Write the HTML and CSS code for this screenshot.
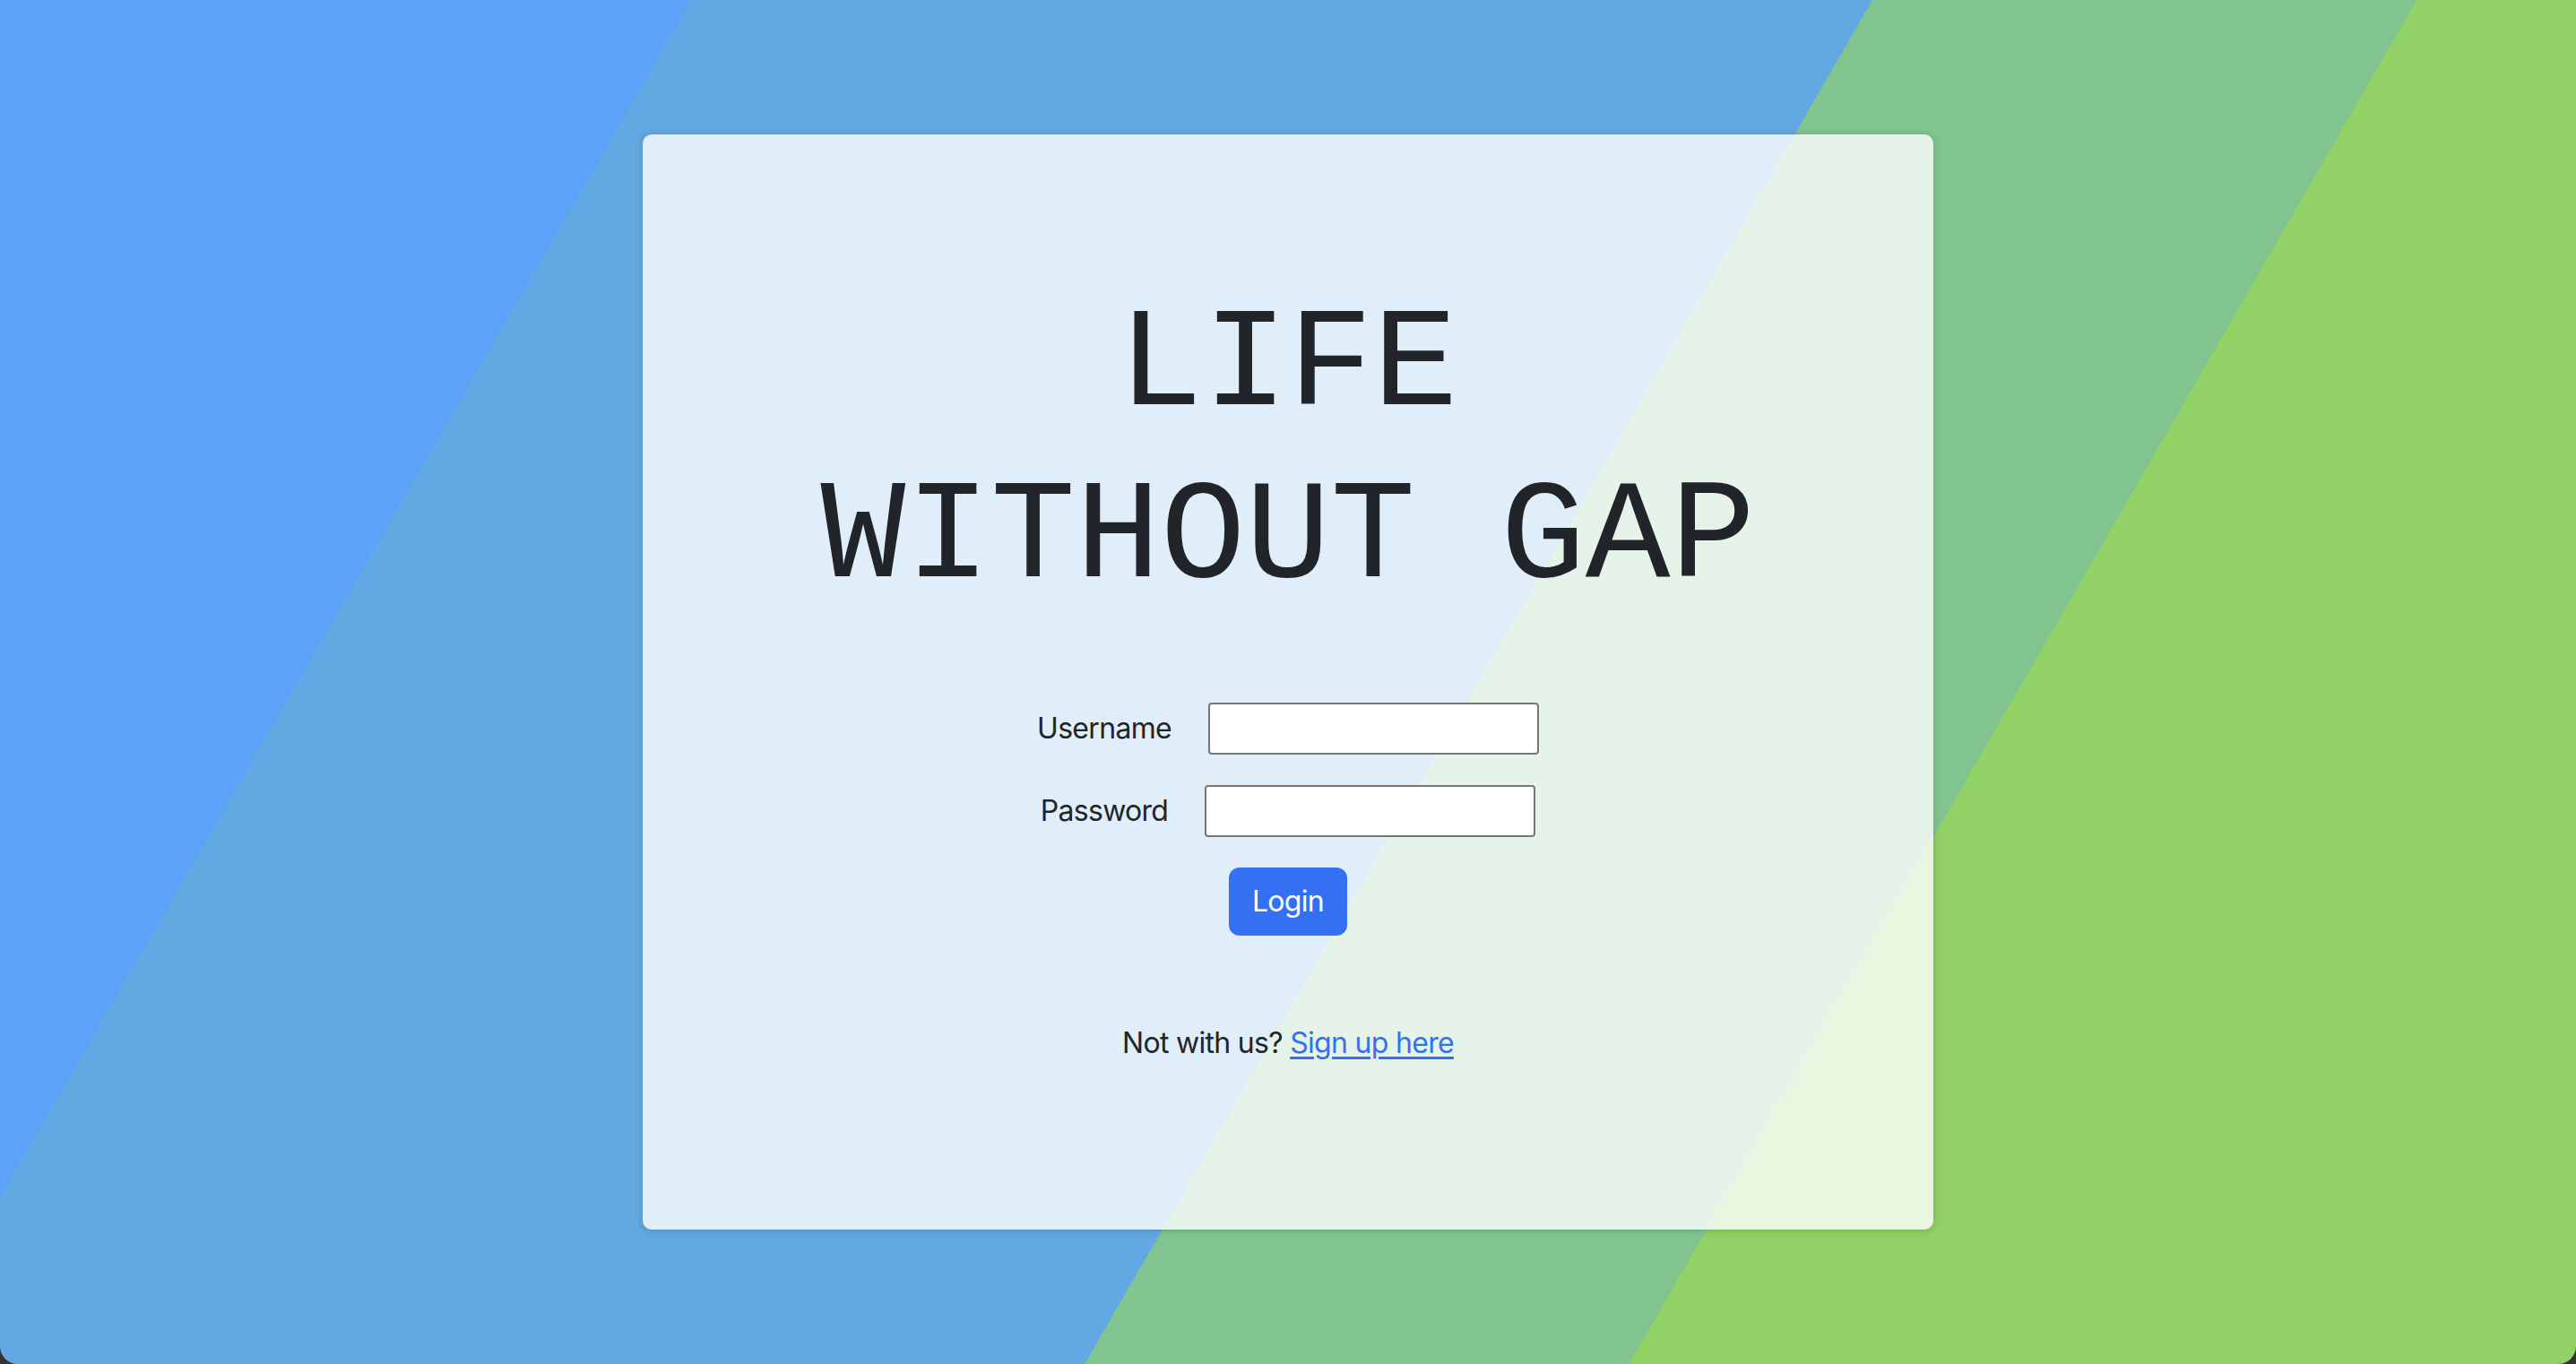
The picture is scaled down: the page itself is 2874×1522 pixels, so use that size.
FILE: index.html
```html
<!DOCTYPE html>
<html lang="en">
<head>
<meta charset="utf-8">
<title>Life Without Gap</title>
<link rel="stylesheet" href="styles.css">
</head>
<body>
<div class="page">
  <main class="card">
    <h1 class="title">LIFE<br>WITHOUT GAP</h1>
    <form class="login-form">
      <div class="field-row">
        <label class="field-label" for="username">Username</label>
        <input class="field-input" id="username" type="text">
      </div>
      <div class="field-row">
        <label class="field-label" for="password">Password</label>
        <input class="field-input" id="password" type="password">
      </div>
      <button class="btn-login" type="button">Login</button>
    </form>
    <p class="signup">Not with us? <a class="signup-link" href="#">Sign up here</a></p>
  </main>
</div>
</body>
</html>
```
FILE: styles.css
```css
html, body {
  margin: 0;
  padding: 0;
  height: 100%;
  background: #333335;
}

.page {
  height: 100vh;
  box-sizing: border-box;
  display: flex;
  align-items: center;
  justify-content: center;
  border-bottom-left-radius: 20px;
  border-bottom-right-radius: 20px;
  background: linear-gradient(120deg,
    #5aa3f8 0 668px,
    #62a8e2 668px 1809px,
    #81c48f 1809px 2335px,
    #91d165 2335px);
  font-family: "Inter", "Liberation Sans", sans-serif;
  color: #212529;
  font-size: 32px;
  line-height: 48px;
  letter-spacing: -0.7px;
}

.card {
  width: 1440px;
  height: 1222px;
  box-sizing: border-box;
  padding-top: 163px;
  background: rgba(255, 255, 255, 0.8);
  border-radius: 10px;
  box-shadow: 0 1px 8px rgba(0, 0, 0, 0.18);
  display: flex;
  flex-direction: column;
  align-items: center;
}

.title {
  margin: 0;
  font-family: "Liberation Mono", "Courier New", monospace;
  font-weight: normal;
  font-size: 158px;
  line-height: 192px;
  letter-spacing: 0;
  text-align: center;
  color: #212529;
}

.login-form {
  margin-top: 87px;
  display: flex;
  flex-direction: column;
  align-items: center;
  gap: 34px;
}

.field-row {
  display: flex;
  align-items: center;
  gap: 41px;
}

.field-label {
  font-size: 32px;
  line-height: 48px;
}

.field-input {
  width: 369px;
  height: 58px;
  box-sizing: border-box;
  border: 2px solid #767676;
  border-radius: 4px;
  background: #fff;
  padding: 2px 4px;
  font: inherit;
}

.btn-login {
  width: 132px;
  height: 76px;
  border: none;
  border-radius: 12px;
  background: #3470f4;
  color: #fff;
  font-family: inherit;
  font-size: 32px;
  line-height: 48px;
  letter-spacing: -0.7px;
  padding: 0;
  cursor: pointer;
}

.signup {
  margin: 96px 0 0;
}

.signup-link {
  color: #3470f4;
  text-decoration: underline;
  text-underline-offset: 4px;
}
```
